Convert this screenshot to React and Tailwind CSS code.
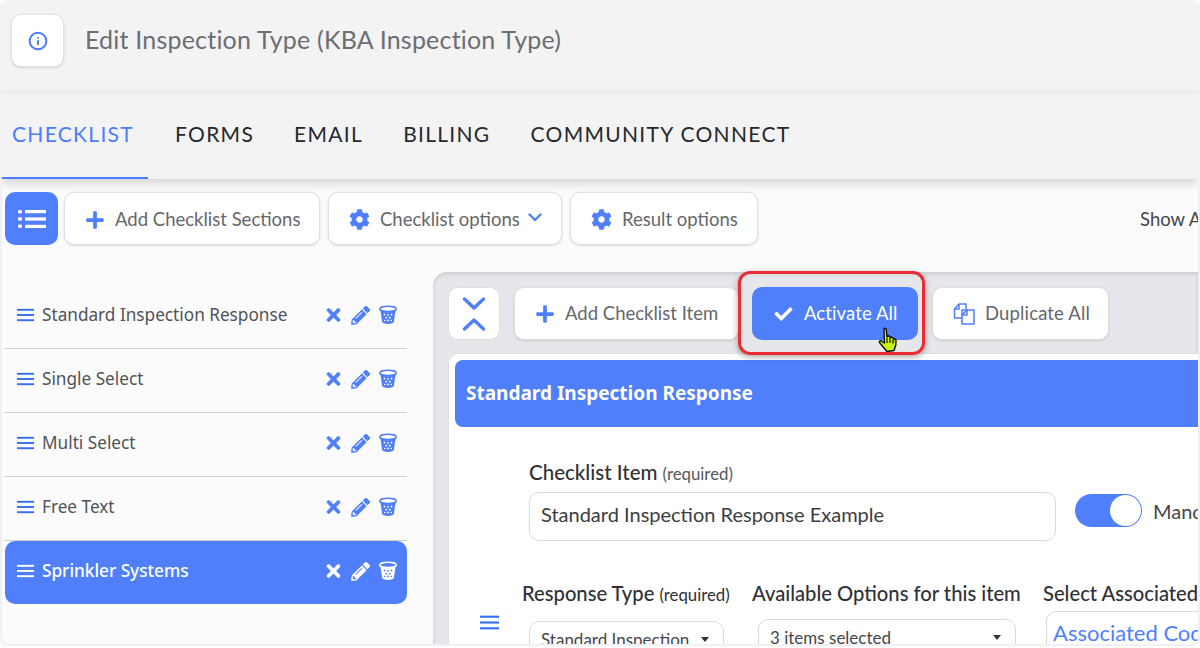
import { Info } from 'lucide-react'
import { FaCog, FaPlus, FaCheck, FaTimes, FaPencilAlt } from 'react-icons/fa'

const sections = [
  { name: 'Standard Inspection Response' },
  { name: 'Single Select' },
  { name: 'Multi Select' },
  { name: 'Free Text' },
  { name: 'Sprinkler Systems', active: true },
]

const Bars = ({ className }) => (
  <svg viewBox="0 0 18 14" className={className} fill="currentColor">
    <rect x="0" y="0.5" width="18" height="2" />
    <rect x="0" y="6" width="18" height="2" />
    <rect x="0" y="11.5" width="18" height="2" />
  </svg>
)

const ListIcon = () => (
  <svg viewBox="0 0 28 20" className="w-7 h-5 text-white" fill="currentColor">
    <rect x="0" y="1" width="4" height="3.4" rx="1.4" />
    <rect x="0" y="8.3" width="4" height="3.4" rx="1.4" />
    <rect x="0" y="15.6" width="4" height="3.4" rx="1.4" />
    <rect x="7" y="1" width="21" height="3.2" />
    <rect x="7" y="8.4" width="21" height="3.2" />
    <rect x="7" y="15.8" width="21" height="3.2" />
  </svg>
)

const Trash = ({ className, dots }) => (
  <svg viewBox="0 0 18 19" className={className}>
    <ellipse cx="9" cy="3.4" rx="8.2" ry="2.6" fill="none" stroke="currentColor" strokeWidth="1.6" />
    <path d="M1.4 5 L3.2 16.6 Q3.6 18.4 9 18.4 Q14.4 18.4 14.8 16.6 L16.6 5 Q9 8.4 1.4 5Z" fill="currentColor" />
    <g fill={dots}>
      <circle cx="5.5" cy="9" r="0.9" />
      <circle cx="9" cy="9.6" r="0.9" />
      <circle cx="12.5" cy="9" r="0.9" />
      <circle cx="7.2" cy="12.2" r="0.9" />
      <circle cx="10.8" cy="12.2" r="0.9" />
      <circle cx="9" cy="15" r="0.9" />
      <circle cx="5.8" cy="15" r="0.8" />
      <circle cx="12.2" cy="15" r="0.8" />
    </g>
  </svg>
)

const Cursor = () => (
  <svg viewBox="0 0 20 26" className="w-5 h-[26px]">
    <path
      d="M6 1.5 Q7.8 0.8 8.3 2.5 L9 10 L10 8.8 L11.5 9.2 L12 10.6 L13.5 10 L15 11 L15.4 12 L16.8 11.8 L18 13 L17.8 18 L16 23.5 L9 24.5 L6 21 L1.5 15.5 Q1 13.6 3 13.6 L6.4 16 Z"
      fill="#c6f514"
      stroke="#111"
      strokeWidth="1.4"
      strokeLinejoin="round"
    />
    <path d="M9 11 V16 M12 11 V16 M15 12.5 V16.5" stroke="#111" strokeWidth="1.2" />
  </svg>
)

const Collapse = () => (
  <svg viewBox="0 0 24 36" className="w-[24px] h-[36px] text-[#4f7ffb]" fill="none" stroke="currentColor" strokeWidth="3.4" strokeLinecap="round" strokeLinejoin="round">
    <path d="M2.5 3 L12 12 L21.5 3" />
    <path d="M2.5 33 L12 24 L21.5 33" />
  </svg>
)

const Docs = () => (
  <svg viewBox="0 0 22 22" className="w-[22px] h-[22px] text-[#4f7ffb]" fill="none" stroke="currentColor" strokeWidth="1.5" strokeLinejoin="round">
    <path d="M9 15 H1.5 V6 L6 1 H13 V6" />
    <path d="M1.5 6 H6 V1" />
    <path d="M9 7 H16 L16 7 H21 V21 H9 Z" fill="#fff" />
    <path d="M9 12 L14 7 V12 Z" />
  </svg>
)

const ToolButton = ({ icon, children, className = '' }) => (
  <button className={`h-[53px] shrink-0 flex items-center gap-2.5 rounded-[10px] border border-[#dedfe1] bg-white shadow-sm text-[#64676b] text-[18.5px] font-['Lato',sans-serif] whitespace-nowrap ${className}`}>
    {icon}
    {children}
  </button>
)

const App = () => {
  return (
    <div className="w-[1200px] h-[648px] bg-white">
      <div className="h-[646px] overflow-hidden bg-[#fbfbfc] border-x-2 border-b-2 border-[#f0f0f5] rounded-lg font-['Noto_Sans',sans-serif]">
        {/* Title bar */}
        <div className="h-[93px] bg-[#f3f3f4] flex items-start gap-[21px] pl-[9px] pt-[14px]">
          <div className="w-[53px] h-[53px] rounded-[10px] border border-[#e3e3e5] bg-white shadow-sm flex items-center justify-center">
            <Info className="w-5 h-5 text-[#4a7dff]" strokeWidth={2.4} />
          </div>
          <h1 className="mt-[9px] text-[25px] leading-8 text-[#6b6e72] font-['Lato',sans-serif] tracking-[0.2px]">
            Edit Inspection Type (KBA Inspection Type)
          </h1>
        </div>

        {/* Tabs */}
        <div className="h-[86px] bg-[#f3f3f4] border-t border-[#ececee] shadow-[0_4px_10px_rgba(0,0,0,0.16)] flex font-['Lato',sans-serif] text-[21px] tracking-[1.3px] text-[#26282c]">
          <div className="w-[146px] pl-[10px] pt-[24px] border-b-2 border-[#4a7dff] text-[#4a7dff]">CHECKLIST</div>
          <div className="flex gap-[40px] pl-[27px] pt-[24px]">
            <span>FORMS</span>
            <span>EMAIL</span>
            <span>BILLING</span>
            <span>COMMUNITY CONNECT</span>
          </div>
        </div>

        {/* Toolbar */}
        <div className="flex items-center gap-2 pl-[3px] mt-[13px] h-[53px]">
          <div className="w-[53px] h-[53px] -mr-0.5 rounded-[10px] bg-[#4f7ffb] flex items-center justify-center">
            <ListIcon />
          </div>
          <ToolButton className="w-[256px] pl-[20px] pt-[2px]" icon={<FaPlus className="w-[20px] h-[20px] text-[#4f7ffb]" />}>
            Add Checklist Sections
          </ToolButton>
          <ToolButton className="w-[234px] pl-[20px] pt-[2px]" icon={<FaCog className="w-[21px] h-[21px] text-[#4f7ffb]" />}>
            <span>Checklist options</span>
            <svg viewBox="0 0 14 9" className="w-[14px] h-[9px] -mt-1 -ml-0.5 text-[#4f7ffb]" fill="none" stroke="currentColor" strokeWidth="2.4" strokeLinecap="round" strokeLinejoin="round">
              <path d="M1.5 1.5 L7 7 L12.5 1.5" />
            </svg>
          </ToolButton>
          <ToolButton className="w-[188px] pl-[20px] pt-[2px]" icon={<FaCog className="w-[21px] h-[21px] text-[#4f7ffb]" />}>
            Result options
          </ToolButton>
          <span className="ml-auto pt-[2px] text-[18.5px] font-['Lato',sans-serif] text-[#44474b] whitespace-nowrap w-[58px] overflow-hidden">Show All</span>
        </div>

        <div className="flex mt-[27px] h-[400px]">
          {/* Section list */}
          <div className="w-[402px] ml-[3px] shrink-0 pt-[13px]">
            {sections.map((s) => (
              <div
                key={s.name}
                className={`flex items-center pl-3 pr-[10px] pb-[3px] ${
                  s.active
                    ? 'h-[63px] bg-[#4f7ffb] text-white rounded-[10px] font-medium'
                    : 'h-[64px] border-b border-[#cfd0d2] text-[#505357]'
                }`}
              >
                <Bars className={`w-[17px] h-[14px] mr-2 ${s.active ? 'text-white' : 'text-[#2f6ff7]'}`} />
                <span className="text-[17.2px] flex-1 whitespace-nowrap">{s.name}</span>
                <div className={`flex items-center gap-[9px] ${s.active ? 'text-white' : 'text-[#4f7ffb]'}`}>
                  <FaTimes className="w-[17px] h-[20px]" />
                  <FaPencilAlt className="w-[19px] h-[19px]" />
                  <Trash className="w-[18px] h-[20px]" dots={s.active ? '#4f7ffb' : '#fff'} />
                </div>
              </div>
            ))}
          </div>

          {/* Item panel */}
          <div className="ml-[26px] flex-1 min-w-0 rounded-tl-[14px] bg-[#e6e7ea] pl-[15px] pt-[15px] relative shadow-[inset_0_2px_4px_rgba(0,0,0,0.12)]">
            <div className="flex items-center h-[53px]">
              <div className="w-[52px] h-[53px] shrink-0 rounded-[10px] border border-[#dedfe1] bg-white flex items-center justify-center">
                <Collapse />
              </div>
              <ToolButton className="w-[225px] ml-[14px] pl-[20px]" icon={<FaPlus className="w-[20px] h-[20px] text-[#4f7ffb]" />}>
                Add Checklist Item
              </ToolButton>
              <button className="w-[166px] h-[53px] shrink-0 ml-[13px] flex items-center gap-[10px] pl-[21px] rounded-[10px] bg-[#4f7ffb] text-white text-[18.5px] tracking-[0.1px] font-['Lato',sans-serif] whitespace-nowrap">
                <FaCheck className="w-[21px] h-[18px]" />
                Activate All
              </button>
              <ToolButton className="w-[177px] ml-[14px] pl-[20px] tracking-[0.15px]" icon={<Docs />}>
                Duplicate All
              </ToolButton>
            </div>

            {/* Highlight around Activate All */}
            <div className="absolute left-[305px] top-[-1px] w-[187px] h-[84px] rounded-[12px] border-[3px] border-[#ee2b34] shadow-[0_2px_6px_rgba(0,0,0,0.35)] pointer-events-none" />
            <div className="absolute left-[445px] top-[55px]">
              <Cursor />
            </div>

            {/* Item card */}
            <div className="mt-[13px] bg-white rounded-tl-[10px] border-t border-l border-[#dedfe1] pl-[6px] pt-[6px] h-[320px] font-['Lato',sans-serif]">
              <div className="h-[67px] bg-[#4f7ffb] rounded-l-[8px] flex items-center pl-[11px] text-white text-[19px] font-bold font-['Noto_Sans',sans-serif]">
                Standard Inspection Response
              </div>

              <div className="pl-[74px] pt-[32px]">
                <div className="text-[#2f3135] text-[20.5px] leading-[26px] font-medium whitespace-nowrap">
                  Checklist Item <span className="text-[16.8px] font-normal text-[#55585c]">(required)</span>
                </div>
                <div className="flex items-center mt-[5px]">
                  <div className="w-[527px] h-[49px] shrink-0 border border-[#d9dadc] rounded-[10px] flex items-center pl-[11px] pb-[5px] text-[20px] text-[#3b3d41]">
                    Standard Inspection Response Example
                  </div>
                  <div className="ml-[19px] w-[67px] h-[33px] shrink-0 rounded-full bg-[#4f7ffb] flex items-center justify-end pr-[1px] -mt-[12px]">
                    <div className="w-[31px] h-[31px] rounded-full bg-white" />
                  </div>
                  <span className="ml-[11px] text-[20px] text-[#44474b] -mt-[12px]">Mandatory</span>
                </div>
              </div>

              <div className="flex pt-[39px] pl-[25px]">
                <Bars className="w-[19px] h-[15px] mt-[35px] text-[#2f6ff7] shrink-0" />
                <div className="ml-[23px] w-[230px] shrink-0">
                  <div className="text-[20.2px] leading-[26px] whitespace-nowrap font-medium text-[#2f3135]">
                    Response Type <span className="text-[16.8px] font-normal">(required)</span>
                  </div>
                  <div className="mt-[13px] ml-[7px] w-[195px] h-[40px] border border-[#d9dadc] rounded-[10px] flex items-center justify-between pl-[11px] pr-[14px] pb-[3px] text-[17px] text-[#44474b] whitespace-nowrap">
                    Standard Inspection
                    <span className="w-0 h-0 border-x-[4px] border-x-transparent border-t-[5px] border-t-[#333]" />
                  </div>
                </div>
                <div className="w-[291px] shrink-0">
                  <div className="text-[20.2px] leading-[26px] whitespace-nowrap font-medium text-[#2f3135]">
                    Available Options for this item
                  </div>
                  <div className="mt-[13px] ml-[6px] w-[258px] h-[40px] border border-[#d9dadc] rounded-[10px] flex items-center justify-between pl-[11px] pr-[14px] pb-[3px] text-[17px] text-[#44474b]">
                    3 items selected
                    <span className="w-0 h-0 border-x-[4px] border-x-transparent border-t-[5px] border-t-[#333]" />
                  </div>
                </div>
                <div className="shrink-0">
                  <div className="text-[20.2px] leading-[26px] whitespace-nowrap font-medium text-[#2f3135]">Select Associated</div>
                  <div className="mt-[5px] ml-[3px] w-[180px] h-[50px] border border-[#d9dadc] rounded-l-[10px] pl-[6px] pt-[4px] text-[22px] text-[#4f7ffb] whitespace-nowrap">
                    Associated Code
                  </div>
                </div>
              </div>
            </div>
          </div>
        </div>
      </div>
    </div>
  )
}

export default App
